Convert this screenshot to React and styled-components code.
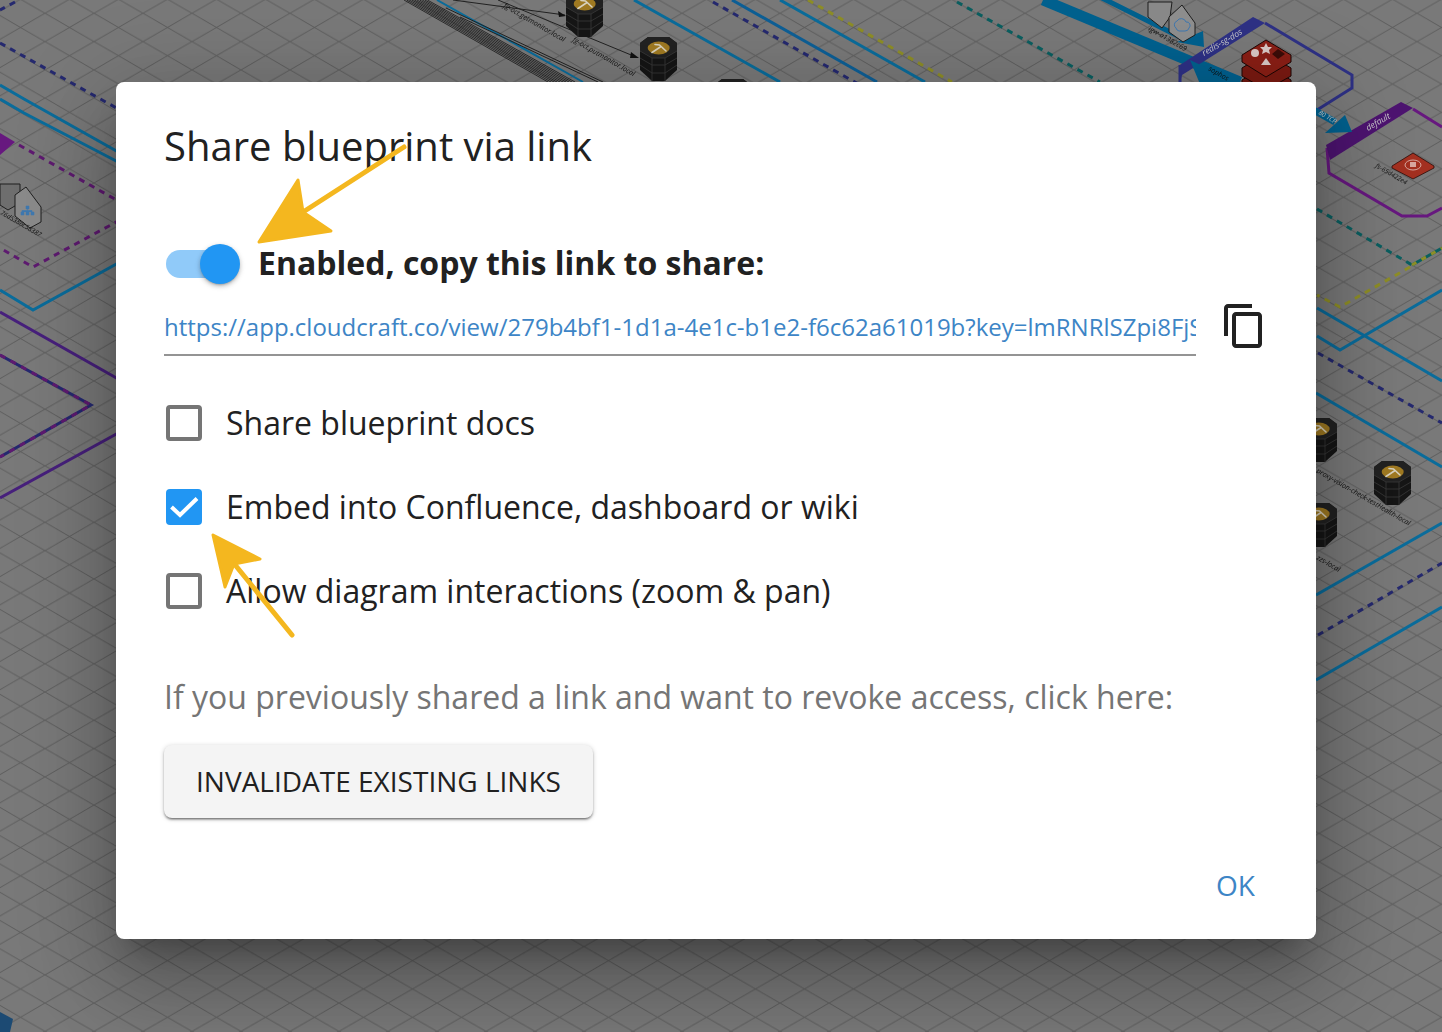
import React from 'react'
import styled, { createGlobalStyle } from 'styled-components'

const GlobalStyle = createGlobalStyle`
    html, body {
        margin: 0;
        padding: 0;
        background: #787878;
    }
    body {
        font-family: "Open Sans", "Liberation Sans", sans-serif;
        color: #212121;
    }
`

const Page = styled.div`
    position: relative;
    width: 1442px;
    height: 1032px;
    overflow: hidden;
    padding: 82px 0 0 116px;
    box-sizing: border-box;
`

const Canvas = styled.svg`
    position: absolute;
    left: 0;
    top: 0;
    filter: blur(0.45px);
`

const Dialog = styled.section`
    position: relative;
    width: 1200px;
    height: 857px;
    box-sizing: border-box;
    padding: 39px 48px 0;
    background: #fff;
    border-radius: 8px;
    box-shadow: 0 22px 30px -14px rgba(0, 0, 0, 0.28), 0 48px 76px 6px rgba(0, 0, 0, 0.16), 0 18px 92px 16px rgba(0, 0, 0, 0.16);
`

const Title = styled.h2`
    margin: 0;
    font-size: 40px;
    line-height: 50px;
    font-weight: 400;
    color: #212121;
`

const SwitchRow = styled.div`
    display: flex;
    align-items: center;
    margin-top: 73px;
    height: 40px;
    padding-left: 2px;
`

const Track = styled.div`
    position: relative;
    width: 68px;
    height: 28px;
    border-radius: 14px;
    background: #90caf9;
`

const Thumb = styled.div`
    position: absolute;
    left: 34px;
    top: -6px;
    width: 40px;
    height: 40px;
    border-radius: 50%;
    background: #2196f3;
    box-shadow: 0 2px 2px -1px rgba(0, 0, 0, 0.2), 0 2px 4px 0 rgba(0, 0, 0, 0.16), 0 2px 6px 0 rgba(0, 0, 0, 0.12);
`

const SwitchLabel = styled.strong`
    margin: -2px 0 0 24px;
    font-size: 32px;
    line-height: 40px;
    font-weight: 700;
    color: #212121;
`

const LinkRow = styled.div`
    display: flex;
    align-items: flex-start;
    margin-top: 18px;
`

const LinkField = styled.div`
    width: 1032px;
    height: 54px;
    box-sizing: border-box;
    border-bottom: 2px solid #949494;
    overflow: hidden;
    white-space: nowrap;
    font-size: 24px;
    line-height: 50px;
    color: #3d85c6;
`

const CopyButton = styled.div`
    width: 48px;
    height: 48px;
    margin-left: 24px;
    color: #212121;
`

const Options = styled.div`
    display: flex;
    flex-direction: column;
    gap: 40px;
    margin-top: 45px;
    padding-left: 2px;
`

const Option = styled.label`
    display: flex;
    align-items: center;
    height: 44px;
    font-size: 32px;
    color: #212121;
`

const OptionText = styled.span`
    margin-top: -2px;
`

const Box = styled.span`
    display: flex;
    align-items: center;
    justify-content: center;
    flex: none;
    width: 36px;
    height: 36px;
    box-sizing: border-box;
    margin-right: 24px;
    border-radius: 4px;
    border: ${(props) => (props.$checked ? 'none' : '4px solid #757575')};
    background: ${(props) => (props.$checked ? '#2196f3' : 'transparent')};
`

const Hint = styled.p`
    margin: 62px 0 0;
    font-size: 32px;
    line-height: 44px;
    color: #757575;
    white-space: nowrap;
`

const InvalidateButton = styled.button`
    display: block;
    width: 429px;
    height: 73px;
    margin-top: 26px;
    padding: 0 0 2px;
    border: 0;
    border-radius: 8px;
    background: #f4f4f4;
    font-family: inherit;
    font-size: 28px;
    color: #212121;
    box-shadow: 0 3px 1px -2px rgba(0, 0, 0, 0.2), 0 2px 2px 0 rgba(0, 0, 0, 0.28), 0 1px 5px 0 rgba(0, 0, 0, 0.2);
`

const Footer = styled.div`
    display: flex;
    justify-content: flex-end;
    margin-top: 47px;
    padding-right: 13px;
`

const OkButton = styled.span`
    font-size: 28px;
    line-height: 40px;
    color: #3d85c6;
`

const Annotations = styled.svg`
    position: absolute;
    left: 0;
    top: 0;
    pointer-events: none;
`

const BLUE = '#0a6c9b'
const NAVY = '#25296f'
const PURPLE = '#47207c'
const MAGENTA = '#5e1a70'
const OLIVE = '#8e8e26'
const TEAL = '#0a5f60'
const VIOLET = '#67187f'
const INDIGO = '#2e3185'

// linhas do diagrama: pontos, cor, largura
const solidas = [
    ['0,99 24,113 120,163', BLUE, 3],
    ['0,85 24,99 120,153', BLUE, 3],
    ['0,290 33,310 120,262', BLUE, 3],
    ['0,312 120,380', PURPLE, 3],
    ['0,498 120,432', PURPLE, 3],
    ['634,0 780,82', BLUE, 3],
    ['732,0 877,82', '#0d5f96', 3],
    ['780,0 925,82', BLUE, 3],
    ['1442,290 1340,350 1317,336', BLUE, 3],
    ['1317,308 1442,381', BLUE, 3],
    ['1316,393 1442,467', BLUE, 3],
    ['1316,595 1442,523', BLUE, 3],
    ['1316,680 1442,607', BLUE, 3],
    ['1265,23 1352,75 1352,88 1317,110', INDIGO, 3],
    ['1413,109 1442,127', VIOLET, 3],
    ['1327,148 1329,173 1402,216 1427,216 1442,208', VIOLET, 3],
]

const tracejadas = [
    ['0,43 120,110', NAVY, 3],
    ['15,2 0,10', NAVY, 3],
    ['19,145 120,202', MAGENTA, 3],
    ['120,220 33,267 0,248', MAGENTA, 3],
    ['713,2 860,85', NAVY, 3],
    ['808,0 952,82', OLIVE, 3],
    ['957,2 1100,82', TEAL, 3],
    ['1317,209 1412,265', TEAL, 3],
    ['1410,267 1340,307 1317,295', OLIVE, 3],
    ['1318,353 1442,423', NAVY, 3],
    ['1318,635 1442,563', NAVY, 3],
]

const etiquetas = [
    ['76d5386c58387', 0, 214, 30, 6.5, '#111'],
    ['fg-oct.getmonitor.local', 503, 7, 30, 7, '#111'],
    ['fg-oct.putmonitor.local', 572, 41, 30, 7, '#111'],
    ['igw-a1382c69', 1148, 30, 30, 7, '#111'],
    ['sophos', 1208, 70, 30, 7, '#111'],
    ['redis-sg-dos', 1204, 56, -30, 8.5, '#ccc'],
    ['80 TCP', 1318, 114, 30, 6.5, '#ccc'],
    ['default', 1368, 131, -30, 8.5, '#ccc'],
    ['fs-65d422e4', 1375, 167, 30, 6.5, '#111'],
    ['proxy-vision-check-testHealth-local', 1316, 472, 30, 7, '#111'],
    ['zzs-local', 1316, 559, 30, 7, '#111'],
]

const Lambda = ({ x, y }) => (
    <g transform={`translate(${x} ${y})`}>
        <polygon points="8,0 29,0 37,6 37,33 25,44 12,44 0,33 0,6" fill="#161616" />
        <polygon points="8,0 29,0 37,6 37,14 25,21 12,21 0,14 0,6" fill="#222" />
        <g fill="none" stroke="#3a3a3a" strokeWidth="0.8">
            <polyline points="0,14 12,21 25,21 37,14" />
            <polyline points="0,21 12,28 25,28 37,21" />
            <polyline points="0,28 12,36 25,36 37,28" />
            <path d="M12 21V44M25 21V44" />
        </g>
        <ellipse cx="18.7" cy="11" rx="11" ry="6.5" fill="#a07a22" />
        <path d="M15 7.500L19.500 8L26 14M12 15.500L21 9.500" fill="none" stroke="#d9d2be" strokeWidth="1.600" strokeLinecap="round" />
    </g>
)

const Diagram = () => (
    <Canvas width="1442" height="1032" viewBox="0 0 1442 1032">
        <defs>
            <pattern id="grade" width="49" height="28.28" patternUnits="userSpaceOnUse" patternTransform="translate(45 13.3)">
                <path d="M0 0L49 28.28M0 28.28L49 0" stroke="#5e5e5e" strokeWidth="1" fill="none" />
            </pattern>
        </defs>
        <rect width="1442" height="1032" fill="#797979" />
        <rect width="1442" height="1032" fill="url(#grade)" />

        {solidas.map(([points, cor, largura]) => (
            <polyline key={points} points={points} fill="none" stroke={cor} strokeWidth={largura} />
        ))}
        {tracejadas.map(([points, cor, largura]) => (
            <polyline key={points} points={points} fill="none" stroke={cor} strokeWidth={largura} strokeDasharray="6 5.5" />
        ))}

        {/* tracejados de duas cores */}
        <polyline points="0,355 91,405 0,457" fill="none" stroke={NAVY} strokeWidth="3" />
        <polyline points="0,355 91,405 0,457" fill="none" stroke={MAGENTA} strokeWidth="3" strokeDasharray="6 6" />
        <polyline points="1412,265 1442,248" fill="none" stroke={TEAL} strokeWidth="3" />
        <polyline points="1412,265 1442,248" fill="none" stroke={OLIVE} strokeWidth="3" strokeDasharray="5 6" />

        {/* feixe de linhas finas */}
        {Array.from({ length: 10 }, (_, i) => (
            <line key={i} x1={404 + i * 2.6} y1="0" x2={548 + i * 3} y2="82" stroke="#222" strokeWidth="0.9" />
        ))}
        <line x1="437" y1="0" x2="583" y2="82" stroke={BLUE} strokeWidth="2" />
        <line x1="446" y1="8" x2="603" y2="82" stroke="#222" />
        <line x1="460" y1="17" x2="598" y2="82" stroke="#222" />
        <line x1="453" y1="0" x2="565" y2="15" stroke="#222" />
        <line x1="498" y1="0" x2="636" y2="57" stroke="#222" />
        <polygon points="566,16 558,11 559,17" fill="#111" />
        <polygon points="639,58 631,52 630,58" fill="#111" />

        <Lambda x={566} y={-7} />
        <Lambda x={640} y={37} />
        <Lambda x={714} y={79} />
        <Lambda x={1300} y={418} />
        <Lambda x={1300} y={503} />
        <Lambda x={1374} y={461} />

        {/* faixas azuis grossas */}
        <polyline points="1043,0 1240,82" fill="none" stroke="#00618f" strokeWidth="11" />
        <polyline points="1098,-4 1190,42" fill="none" stroke="#00618f" strokeWidth="5" />
        <polygon points="1204,47 1203,31 1177,42" fill="#00618f" />

        {/* grupo redis */}
        <polygon points="1180,65 1253,17 1265,23 1182,75 1180,82" fill={INDIGO} />
        <polyline points="1180,65 1180,84" stroke={INDIGO} strokeWidth="3" />
        <polygon points="1190,60 1220,74 1240,84 1200,84" fill="#00618f" />
        <g stroke="#1c0705" strokeWidth="1">
            <polygon points="1242,80 1266,65 1291,80 1291,90 1242,90" fill="#6f1710" />
            <polygon points="1242,68 1266,53 1291,68 1291,76 1266,90 1242,76" fill="#7a1a12" />
            <polygon points="1242,55 1266,40 1291,55 1291,62 1266,77 1242,62" fill="#8a1f16" />
        </g>
        <circle cx="1255" cy="53" r="4" fill="#d9c9c6" />
        <polygon points="1266,43 1268,47 1272,47 1269,50 1270,54 1266,52 1262,54 1263,50 1260,47 1264,47" fill="#d9c9c6" />
        <polygon points="1278,49 1285,54 1278,59 1272,54" fill="#3a0c08" />
        <polygon points="1266,58 1271,65 1261,65" fill="#d9c9c6" />

        {/* gateways */}
        <g stroke="#1f1f1f" strokeWidth="1">
            <polygon points="1148,2 1172,2 1170,17 1162,28 1148,17" fill="#8a8a8a" />
            <polygon points="1182,5 1195,23 1195,35 1183,42 1169,32 1169,17" fill="#8f8f8f" />
            <polygon points="0,184 20,184 20,203 8,210 0,205" fill="#6e6e6e" />
            <polygon points="26,187 41,207 41,222 30,228 15,216 15,195" fill="#8a8a8a" />
        </g>
        <path d="M1176 28a4 4 0 0 1 1-7 5 5 0 0 1 9 1 3.500 3.500 0 0 1 3 6 4 4 0 0 1-4 3h-6a4 4 0 0 1-3-3z" fill="none" stroke="#3f78b0" strokeWidth="1" />
        <path d="M26 206h3v3h-3zM21 212h3v3h-3zM26 212h3v3h-3zM31 212h3v3h-3zM27.500 209v3M22 212v-1.500h10V212" fill="#3f78b0" stroke="#3f78b0" strokeWidth="0.6" />

        {/* grupo purple e seta azul */}
        <polygon points="0,133 15,142 0,155" fill={VIOLET} />
        <polygon points="1326,145 1401,102 1413,108 1330,160" fill="#4d1470" />
        <polyline points="1310,108 1335,122" fill="none" stroke="#00618f" strokeWidth="7" />
        <polygon points="1352,132 1345,115 1325,133" fill="#00618f" />

        {/* filesystem vermelho */}
        <polygon points="1392,166 1413,153 1434,166 1434,168 1413,179 1392,168" fill="#a33020" stroke="#2a0b07" strokeWidth="0.8" />
        <ellipse cx="1413" cy="165" rx="8" ry="5" fill="none" stroke="#d8a79f" strokeWidth="1" />
        <rect x="1410" y="162" width="6" height="5" fill="#d8a79f" />

        {/* bloco azul no canto */}
        <polygon points="0,1012 13,1019 10,1032 0,1032" fill="#1c4a73" />

        {etiquetas.map(([texto, x, y, angulo, tamanho, cor]) => (
            <text
                key={texto}
                transform={`translate(${x} ${y}) rotate(${angulo})`}
                fontFamily="'Open Sans', sans-serif"
                fontStyle="italic"
                fontSize={tamanho}
                fill={cor}
            >
                {texto}
            </text>
        ))}
    </Canvas>
)

const App = () => (
    <Page>
        <GlobalStyle />
        <Diagram />
        <Dialog>
            <Title>Share blueprint via link</Title>

            <SwitchRow>
                <Track>
                    <Thumb />
                </Track>
                <SwitchLabel>Enabled, copy this link to share:</SwitchLabel>
            </SwitchRow>

            <LinkRow>
                <LinkField>https://app.cloudcraft.co/view/279b4bf1-1d1a-4e1c-b1e2-f6c62a61019b?key=lmRNRlSZpi8FjS9x2</LinkField>
                <CopyButton>
                    <svg width="48" height="48" viewBox="0 0 24 24" fill="currentColor">
                        <path d="M16 1H4c-1.100 0-2 .9-2 2v14h2V3h12V1zm3 4H8c-1.100 0-2 .9-2 2v14c0 1.100.9 2 2 2h11c1.100 0 2-.9 2-2V7c0-1.100-.9-2-2-2zm0 16H8V7h11v14z" />
                    </svg>
                </CopyButton>
            </LinkRow>

            <Options>
                <Option>
                    <Box />
                    <OptionText>Share blueprint docs</OptionText>
                </Option>
                <Option>
                    <Box $checked>
                        <svg width="36" height="36" viewBox="0 0 36 36">
                            <path d="M5.500 18L14 26L31 9.500" fill="none" stroke="#fff" strokeWidth="4" />
                        </svg>
                    </Box>
                    <OptionText>Embed into Confluence, dashboard or wiki</OptionText>
                </Option>
                <Option>
                    <Box />
                    <OptionText>Allow diagram interactions (zoom &amp; pan)</OptionText>
                </Option>
            </Options>

            <Hint>If you previously shared a link and want to revoke access, click here:</Hint>
            <InvalidateButton>INVALIDATE EXISTING LINKS</InvalidateButton>

            <Footer>
                <OkButton>OK</OkButton>
            </Footer>
        </Dialog>

        <Annotations width="1442" height="1032" viewBox="0 0 1442 1032">
            <g fill="#f4b71f" stroke="#f4b71f" strokeLinejoin="round" strokeLinecap="round">
                <line x1="404" y1="147" x2="300" y2="214" strokeWidth="5" />
                <polygon points="259,242 298,180 303,212 331,231" strokeWidth="3" />
                <line x1="292" y1="635" x2="236" y2="566" strokeWidth="5" />
                <polygon points="213,535 260,559 234,564 225,587" strokeWidth="3" />
            </g>
        </Annotations>
    </Page>
)

export default App
